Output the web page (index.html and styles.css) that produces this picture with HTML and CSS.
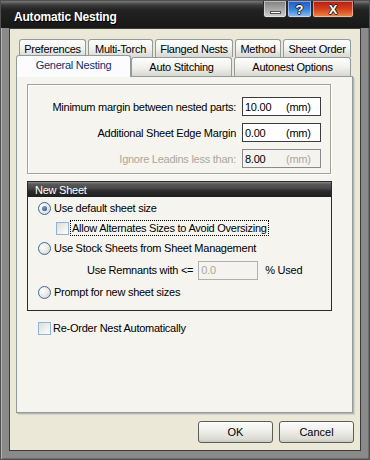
FILE: index.html
```html
<!DOCTYPE html>
<html lang="en">
<head>
  <meta charset="UTF-8">
  <title>Automatic Nesting</title>
  <link rel="stylesheet" href="styles.css">
</head>
<body>
  <div class="window">
    <div class="titlebar">
      <span class="title">Automatic Nesting</span>
      <div class="caption-btns">
        <span class="cap cap-min"><span class="min-bar"></span></span>
        <span class="cap cap-help">?</span>
        <span class="cap cap-close">X</span>
      </div>
    </div>

    <div class="client">
      <!-- two rows of tabs -->
      <div class="tabs">
        <div class="tab-row back">
          <div class="tab t-pref">Preferences</div>
          <div class="tab t-torch">Multi-Torch</div>
          <div class="tab t-flanged">Flanged Nests</div>
          <div class="tab t-method">Method</div>
          <div class="tab t-order">Sheet Order</div>
        </div>
        <div class="tab-row front">
          <div class="tab active t-general">General Nesting</div>
          <div class="tab t-stitch">Auto Stitching</div>
          <div class="tab t-autonest">Autonest Options</div>
        </div>
      </div>

      <div class="panel">
        <div class="group margins">
          <label class="field-label">Minimum margin between nested parts:</label>
          <div class="num"><span class="val">10.00</span><span class="unit">(mm)</span></div>
          <label class="field-label">Additional Sheet Edge Margin</label>
          <div class="num"><span class="val">0.00</span><span class="unit">(mm)</span></div>
          <label class="field-label disabled">Ignore Leadins less than:</label>
          <div class="num off"><span class="val">8.00</span><span class="unit">(mm)</span></div>
        </div>

        <div class="group sheet">
          <div class="group-head">New Sheet</div>
          <div class="group-body">
            <div class="opt"><span class="radio on"></span><span>Use default sheet size</span></div>
            <div class="opt sub"><span class="check"></span><span class="focus">Allow Alternates Sizes to Avoid Oversizing</span></div>
            <div class="opt"><span class="radio"></span><span>Use Stock Sheets from Sheet Management</span></div>
            <div class="opt remnants">
              <span>Use Remnants with &lt;=</span>
              <span class="num small off"><span class="val">0.0</span></span>
              <span class="used">% Used</span>
            </div>
            <div class="opt"><span class="radio"></span><span>Prompt for new sheet sizes</span></div>
          </div>
        </div>

        <div class="opt reorder"><span class="check"></span><span>Re-Order Nest Automatically</span></div>
      </div>

      <div class="actions">
        <button class="button">OK</button>
        <button class="button">Cancel</button>
      </div>
    </div>
  </div>
</body>
</html>
```

FILE: styles.css
```css
* {
  box-sizing: border-box;
}
body {
  margin: 0;
  font-family: "Liberation Sans", Arial, sans-serif;
  font-size: 11px;
  letter-spacing: -0.25px;
  color: #000;
  background: #fff;
}
.window {
  width: 370px;
  height: 460px;
  background: #8a8a8a;
  border: 1px solid #505050;
  box-shadow: inset 1px 1px 0 #b4b4b4, inset -1px -1px 0 #6c6c6c;
  padding: 0 8px 8px 8px;
}
.titlebar {
  height: 27px;
  margin: 0 -8px;
  display: flex;
  align-items: flex-start;
  background: linear-gradient(#7a7a7a, #3c3c3c 4px, #222 9px, #181818);
}
.title {
  margin: 9px 0 0 13px;
  color: #fff;
  font-size: 12px;
  font-weight: bold;
  letter-spacing: -0.2px;
  text-shadow: 1px 1px 0 #000;
}
.caption-btns {
  display: flex;
  margin-left: auto;
  margin-right: 15px;
}
.cap {
  height: 17px;
  border: 1px solid #2a2a2a;
  border-top: none;
  border-radius: 0 0 3px 3px;
  box-shadow: inset 0 0 0 1px rgba(255, 255, 255, 0.45);
  display: flex;
  align-items: center;
  justify-content: center;
  color: #fff;
  font-weight: bold;
  font-size: 13px;
  letter-spacing: 0;
  text-shadow: 1px 0 0 #222, -1px 0 0 #222, 0 1px 0 #222, 0 -1px 0 #222;
}
.cap-min {
  width: 24px;
  background: linear-gradient(#808080, #a6a6a6 50%, #cfcfcf);
  align-items: flex-end;
  padding-bottom: 3px;
}
.min-bar {
  width: 11px;
  height: 3px;
  background: #fff;
  border: 1px solid #555;
}
.cap-help {
  width: 25px;
  background: linear-gradient(#1d58c4, #3b84de 55%, #92c2f0);
}
.cap-close {
  width: 42px;
  background: linear-gradient(#b41c10, #d4401c 50%, #ee8a46);
}

/* client area */
.client {
  height: 423px;
  background: #ebe8d8;
  border: 1px solid #3c3c3c;
  padding: 10px 0 0 6px;
}
.tab-row {
  display: flex;
}
.tab-row.back {
  height: 18px;
  padding-left: 3px;
  gap: 2px;
}
.tab-row.front {
  height: 19px;
  align-items: flex-end;
}
.tab {
  height: 100%;
  display: flex;
  align-items: center;
  justify-content: center;
  border: 1px solid #919b9c;
  border-bottom: none;
  border-radius: 3px 3px 0 0;
  background: linear-gradient(#fefefe, #f0f0ec 55%, #d8d7d0);
  white-space: nowrap;
}
.tab.active {
  height: 22px;
  margin-bottom: -1px;
  position: relative;
  z-index: 1;
  background: #fcfcfe;
  color: #10306c;
  padding-bottom: 4px;
}
.t-pref { width: 67px; }
.t-torch { width: 65px; }
.t-flanged { width: 78px; }
.t-method { width: 46px; }
.t-order { width: 68px; }
.t-general { width: 115px; }
.t-stitch { width: 101px; }
.t-autonest { width: 117px; margin-left: 2px; }

.panel {
  width: 337px;
  height: 337px;
  background: #f5f4ef;
  border: 1px solid #919b9c;
  box-shadow: 1px 1px 0 #b9b7ae, 2px 2px 0 #d4d2c8;
  padding: 7px 0 0 10px;
}
.group.margins {
  width: 304px;
  height: 90px;
  border: 1px solid #a6a293;
  box-shadow: inset 1px 1px 0 #fff, 1px 1px 0 #fff;
  display: grid;
  grid-template-columns: 1fr 79px;
  grid-auto-rows: 19px;
  column-gap: 6px;
  row-gap: 7px;
  padding: 12px 9px 0 0;
}
.field-label {
  display: flex;
  align-items: center;
  justify-content: flex-end;
}
.disabled {
  color: #aca899;
}
.num {
  display: flex;
  align-items: center;
  height: 19px;
  background: #fff;
  border: 1px solid #3c3c3c;
  padding-left: 2px;
}
.num .val {
  width: 41px;
}
.num.off {
  background: #f4f3ef;
  border-color: #8a8a8a;
}
.num.off .unit {
  color: #aca899;
}
.num.small {
  width: 60px;
  border-color: #b0b0b0;
  color: #aca899;
  margin: 0 7px 0 5px;
}

.group.sheet {
  width: 305px;
  margin-top: 7px;
  border: 1px solid #2a2a2a;
}
.group-head {
  height: 15px;
  padding-left: 7px;
  display: flex;
  align-items: center;
  color: #fff;
  background: linear-gradient(#8a8a8a, #5a5a5a 2px, #4a4a4a 6px, #2c2c2c 9px, #1e1e1e);
}
.group-body {
  padding: 1px 0 8px 10px;
}
.opt {
  height: 20px;
  display: flex;
  align-items: center;
}
.opt.sub {
  padding-left: 18px;
}
.opt.remnants {
  padding-left: 49px;
  margin: 2px 0;
}
.radio {
  width: 13px;
  height: 13px;
  margin-right: 3px;
  border-radius: 50%;
  border: 1px solid #3d6a9e;
  background: radial-gradient(circle at 35% 35%, #fff, #e4e4e0 60%, #c8c8c4);
  display: flex;
  align-items: center;
  justify-content: center;
}
.radio.on::after {
  content: "";
  width: 5px;
  height: 5px;
  border-radius: 50%;
  background: radial-gradient(circle at 40% 35%, #7ea0cc, #1f437c);
}
.check {
  width: 13px;
  height: 13px;
  margin-right: 2px;
  border: 1px solid #8fb4d8;
  background: linear-gradient(135deg, #dddcd6, #fff);
}
.focus {
  padding: 0 1px;
  line-height: 14px;
  outline: 1px dotted #000;
}
.reorder {
  margin-top: 7px;
  padding-left: 11px;
}

.actions {
  width: 338px;
  margin-top: 8px;
  display: flex;
  justify-content: flex-end;
  gap: 6px;
}
.button {
  width: 75px;
  height: 22px;
  font-family: "Liberation Sans", Arial, sans-serif;
  font-size: 11px;
  color: #000;
  border: 1px solid #5c5c5c;
  border-radius: 3px;
  background: linear-gradient(#fbfbf9, #f0f0ec 40%, #dcdbd4 85%, #c8c7c0);
  box-shadow: inset 0 1px 0 #fff;
  padding: 0;
}
```
